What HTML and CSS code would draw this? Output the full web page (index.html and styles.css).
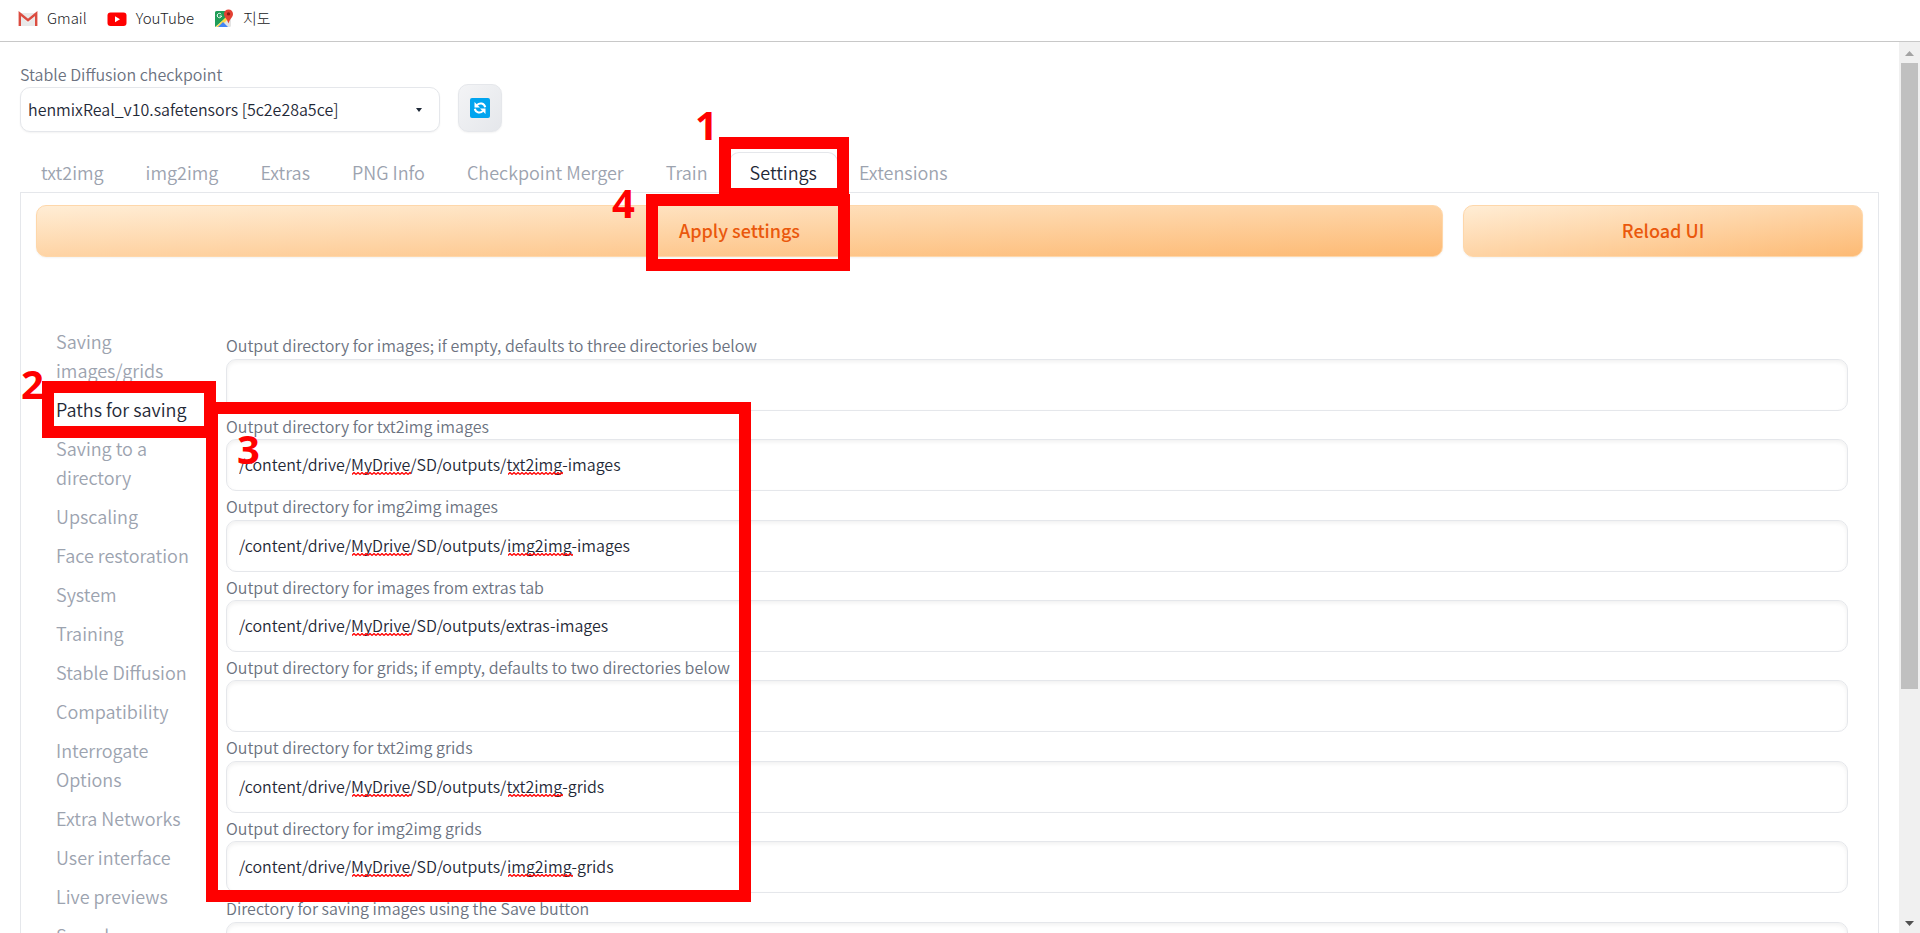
FILE: index.html
```html
<!DOCTYPE html>
<html lang="en">
<head>
<meta charset="utf-8">
<title>Stable Diffusion</title>
<link rel="stylesheet" href="styles.css">
</head>
<body>
<nav class="bookmarks" aria-label="Bookmarks">
  <a class="bookmark" href="#gmail">
    <svg class="bookmark-icon" viewBox="0 0 20 20" aria-hidden="true">
      <path d="M2 4h16v13H2z" fill="#e9e9e9"/>
      <path d="M2 4l8 7 8-7v2l-8 8-8-8z" fill="#f6f6f6"/>
      <path d="M1.800 17V4.600L10 11.200l8.200-6.600V17" fill="none" stroke="#db4c40" stroke-width="2.400"/>
    </svg>
    <span>Gmail</span>
  </a>
  <a class="bookmark" href="#youtube">
    <svg class="bookmark-icon" viewBox="0 0 20 20" aria-hidden="true">
      <rect x="0.500" y="3.500" width="19" height="13.500" rx="3" fill="#f00"/>
      <path d="M8 7.200v6l5-3z" fill="#fff"/>
    </svg>
    <span>YouTube</span>
  </a>
  <a class="bookmark" href="#maps">
    <svg class="bookmark-icon" viewBox="0 0 20 20" aria-hidden="true">
      <rect x="1" y="2" width="16" height="16" rx="1.500" fill="#e4e4e4"/>
      <path d="M1 3.500A1.500 1.500 0 0 1 2.500 2H12L13 8 1 18z" fill="#1f9d58"/>
      <path d="M2 18L12.500 7.500 14.500 9.500 6 18z" fill="#fddb4b"/>
      <path d="M4 18l5-5 5 5z" fill="#4485f5"/>
      <path d="M7.200 5.200A2.200 2.200 0 1 0 7.600 7H5.600" fill="none" stroke="#fff" stroke-width="1"/>
      <path d="M14.500 0.500c2.600 0 4.500 2 4.500 4.400 0 3.400-3.300 4.600-4.500 9.600C13.300 9.500 10 8.300 10 4.900 10 2.500 11.900.5 14.500.5z" fill="#e34133"/>
      <circle cx="14.500" cy="4.900" r="1.700" fill="#8c1d14"/>
    </svg>
    <span>지도</span>
  </a>
</nav>

<div class="viewport">
  <main class="app">
    <div class="quicksettings">
      <div class="checkpoint">
        <label class="label" for="checkpoint">Stable Diffusion checkpoint</label>
        <div class="select-wrap">
          <select class="select" id="checkpoint">
            <option>henmixReal_v10.safetensors [5c2e28a5ce]</option>
          </select>
          <svg class="select-arrow" viewBox="0 0 6 4" aria-hidden="true"><path d="M0 0h6L3 4z"/></svg>
        </div>
      </div>
      <button class="refresh" type="button" aria-label="Refresh checkpoints">
        <svg class="refresh-icon" viewBox="0 0 20 20" aria-hidden="true">
          <rect width="20" height="20" rx="2" fill="#00a4ef"/>
          <path d="M7 7.200C9.500 4.300 14.200 5 15.200 9.200" fill="none" stroke="#fff" stroke-width="2"/>
          <path d="M4.500 4v5.500h5.500z" fill="#fff"/>
          <path d="M13 12.800C10.500 15.700 5.800 15 4.800 10.800" fill="none" stroke="#fff" stroke-width="2"/>
          <path d="M15.500 16v-5.500h-5.500z" fill="#fff"/>
        </svg>
      </button>
    </div>

    <div class="tabs" role="tablist">
      <button class="tab" role="tab" type="button">txt2img</button>
      <button class="tab" role="tab" type="button">img2img</button>
      <button class="tab" role="tab" type="button">Extras</button>
      <button class="tab" role="tab" type="button">PNG Info</button>
      <button class="tab" role="tab" type="button">Checkpoint Merger</button>
      <button class="tab" role="tab" type="button">Train</button>
      <button class="tab tab-active" role="tab" type="button" aria-selected="true">Settings</button>
      <button class="tab" role="tab" type="button">Extensions</button>
    </div>

    <section class="panel">
      <div class="actions">
        <button class="primary primary-wide" type="button">Apply settings</button>
        <button class="primary" type="button">Reload UI</button>
      </div>

      <div class="settings">
        <div class="sections">
          <button class="section" type="button">Saving images/grids</button>
          <button class="section section-active" type="button">Paths for saving</button>
          <button class="section" type="button">Saving to a directory</button>
          <button class="section" type="button">Upscaling</button>
          <button class="section" type="button">Face restoration</button>
          <button class="section" type="button">System</button>
          <button class="section" type="button">Training</button>
          <button class="section" type="button">Stable Diffusion</button>
          <button class="section" type="button">Compatibility</button>
          <button class="section" type="button">Interrogate Options</button>
          <button class="section" type="button">Extra Networks</button>
          <button class="section" type="button">User interface</button>
          <button class="section" type="button">Live previews</button>
          <button class="section" type="button">Sampler parameters</button>
        </div>

        <form class="fields">
          <div class="field">
            <label class="label" for="out-images">Output directory for images; if empty, defaults to three directories below</label>
            <div class="input-wrap"><input class="input" id="out-images" type="text"></div>
          </div>
          <div class="field">
            <label class="label" for="out-txt2img">Output directory for txt2img images</label>
            <div class="input-wrap">
              <input class="input" id="out-txt2img" type="text" value="/content/drive/MyDrive/SD/outputs/txt2img-images">
              <span class="squiggle squiggle-drive"></span><span class="squiggle squiggle-txt"></span>
            </div>
          </div>
          <div class="field">
            <label class="label" for="out-img2img">Output directory for img2img images</label>
            <div class="input-wrap">
              <input class="input" id="out-img2img" type="text" value="/content/drive/MyDrive/SD/outputs/img2img-images">
              <span class="squiggle squiggle-drive"></span><span class="squiggle squiggle-img"></span>
            </div>
          </div>
          <div class="field">
            <label class="label" for="out-extras">Output directory for images from extras tab</label>
            <div class="input-wrap">
              <input class="input" id="out-extras" type="text" value="/content/drive/MyDrive/SD/outputs/extras-images">
              <span class="squiggle squiggle-drive"></span>
            </div>
          </div>
          <div class="field">
            <label class="label" for="out-grids">Output directory for grids; if empty, defaults to two directories below</label>
            <div class="input-wrap"><input class="input" id="out-grids" type="text"></div>
          </div>
          <div class="field">
            <label class="label" for="out-txt2img-grids">Output directory for txt2img grids</label>
            <div class="input-wrap">
              <input class="input" id="out-txt2img-grids" type="text" value="/content/drive/MyDrive/SD/outputs/txt2img-grids">
              <span class="squiggle squiggle-drive"></span><span class="squiggle squiggle-txt"></span>
            </div>
          </div>
          <div class="field">
            <label class="label" for="out-img2img-grids">Output directory for img2img grids</label>
            <div class="input-wrap">
              <input class="input" id="out-img2img-grids" type="text" value="/content/drive/MyDrive/SD/outputs/img2img-grids">
              <span class="squiggle squiggle-drive"></span><span class="squiggle squiggle-img"></span>
            </div>
          </div>
          <div class="field">
            <label class="label" for="out-save">Directory for saving images using the Save button</label>
            <div class="input-wrap"><input class="input" id="out-save" type="text"></div>
          </div>
        </form>
      </div>
    </section>
  </main>

  <div class="scrollbar" aria-hidden="true">
    <svg class="scroll-arrow" viewBox="0 0 9 5"><path d="M0 5h9L4.500 0z" fill="#a3a3a3"/></svg>
    <div class="scroll-thumb"></div>
    <div class="scroll-rest"></div>
    <svg class="scroll-arrow" viewBox="0 0 9 5"><path d="M0 0h9L4.500 5z" fill="#505050"/></svg>
  </div>
</div>

<div class="mark mark-box mark-tab"></div>
<div class="mark mark-box mark-apply"></div>
<div class="mark mark-box mark-section"></div>
<div class="mark mark-box mark-fields"></div>
<span class="mark mark-number number-one">1</span>
<span class="mark mark-number number-two">2</span>
<span class="mark mark-number number-three">3</span>
<span class="mark mark-number number-four">4</span>
</body>
</html>
```
FILE: styles.css
```css
* { box-sizing: border-box; }

body {
  margin: 0;
  height: 100vh;
  display: flex;
  flex-direction: column;
  position: relative;
  overflow: hidden;
  background: #fff;
  color: #1f2937;
  font-family: "Noto Sans CJK KR", "Noto Sans", sans-serif;
  font-size: 16px;
  font-weight: 350;
  line-height: 1.4;
}

button, input, select { font: inherit; color: inherit; margin: 0; }
button { cursor: pointer; }

.bookmarks {
  flex: none;
  display: flex;
  align-items: center;
  gap: 20px;
  height: 42px;
  padding: 0 18px 4px;
  border-bottom: 1px solid #c8c8c8;
}
.bookmark {
  display: flex;
  align-items: center;
  gap: 9px;
  color: #202124;
  font-size: 15px;
  font-weight: 300;
  line-height: 1.5;
  text-decoration: none;
}
.bookmark-icon { width: 20px; height: 20px; }

.viewport { flex: 1; min-height: 0; display: flex; }
.app {
  flex: 1;
  min-width: 0;
  overflow: hidden;
  padding: 21px 20px 0;
}

.label { display: block; color: #6b7280; }

.quicksettings { display: flex; align-items: flex-end; gap: 18px; }
.checkpoint { width: 420px; }
.select-wrap { position: relative; margin-top: 2px; }
.select {
  display: block;
  width: 100%;
  height: 45px;
  padding: 0 40px 2px 7px;
  border: 1px solid #e5e7eb;
  border-radius: 10px;
  background: #fff;
  box-shadow: 0 1px 2px rgba(0, 0, 0, 0.05);
  appearance: none;
}
.select-arrow {
  position: absolute;
  right: 18px;
  top: 21px;
  width: 6px;
  height: 4px;
  fill: #1f2937;
}
.refresh {
  display: grid;
  place-items: center;
  width: 44px;
  height: 48px;
  padding: 0;
  border: 1px solid #e5e7eb;
  border-radius: 10px;
  background: linear-gradient(to bottom right, #f3f4f6, #e5e7eb);
  box-shadow: 0 1px 2px rgba(0, 0, 0, 0.05);
}
.refresh-icon { width: 20px; height: 20px; }

.tabs { display: flex; margin-top: 20px; }
.tab {
  height: 40px;
  padding: 0 20px;
  border: 1px solid transparent;
  border-bottom: 0;
  border-radius: 10px 10px 0 0;
  background: none;
  color: #9ca3af;
  font-size: 18px;
}
.tab-active { border-color: #e5e7eb; color: #1f2937; }

.panel { border: 1px solid #e5e7eb; padding: 12px 15px; }
.actions { display: flex; gap: 20px; }
.primary {
  flex: 0 0 400px;
  height: 52px;
  padding: 0 0 2px;
  border: 1px solid #fed7aa;
  border-radius: 10px;
  background: linear-gradient(to bottom right, #ffedd5, #fdba74);
  box-shadow: 0 1px 2px rgba(0, 0, 0, 0.05);
  color: #ea580c;
  font-size: 18px;
  font-weight: 500;
}
.primary-wide { flex: 1; }

.settings { display: flex; margin-top: 65px; padding: 0 15px 0 10px; }
.sections { flex: 0 0 180px; }
.section {
  display: block;
  width: 160px;
  padding: 5px 10px;
  border: 0;
  background: none;
  color: #9ca3af;
  font-size: 18px;
  line-height: 29px;
  text-align: left;
}
.section-active { color: #1f2937; }

.fields { flex: 1; min-width: 0; padding-top: 8px; }
.field { padding-top: 4px; }
.input-wrap { position: relative; margin-top: 2px; }
.input {
  display: block;
  width: 100%;
  height: 52px;
  padding: 0 12px 2px;
  border: 1px solid #e5e7eb;
  border-radius: 10px;
  background: #fff;
  box-shadow: inset 0 2px 4px rgba(0, 0, 0, 0.06);
}
.squiggle {
  position: absolute;
  top: 33px;
  height: 3px;
  background: url("data:image/svg+xml,%3Csvg xmlns='http://www.w3.org/2000/svg' width='4' height='3'%3E%3Cpath d='M0 2.500L2 .5l2 2' fill='none' stroke='red' stroke-width='1.300'/%3E%3C/svg%3E") repeat-x;
}
.squiggle-drive { left: 126px; width: 59px; }
.squiggle-txt { left: 282px; width: 55px; }
.squiggle-img { left: 282px; width: 65px; }

.scrollbar {
  flex: none;
  display: flex;
  flex-direction: column;
  width: 21px;
  padding: 0 2px;
  background: #f0f0f0;
}
.scroll-arrow { display: block; width: 9px; height: 5px; margin: 9px auto 7px; }
.scroll-thumb { flex: 14; background: #c0c0c0; }
.scroll-rest { flex: 5; }

.mark { position: absolute; pointer-events: none; }
.mark-box { border: 12px solid #f00; }
.mark-tab { left: 719px; top: 137px; width: 130px; height: 63px; }
.mark-apply { left: 646px; top: 194px; width: 204px; height: 77px; }
.mark-section { left: 42px; top: 381px; width: 174px; height: 57px; }
.mark-fields { left: 206px; top: 402px; width: 545px; height: 500px; }
.mark-number {
  color: #f00;
  font-family: "Open Sans", "Noto Sans", sans-serif;
  font-size: 40px;
  font-weight: 700;
  line-height: 40px;
}
.number-one { left: 695px; top: 105px; }
.number-two { left: 21px; top: 364px; }
.number-three { left: 237px; top: 429px; }
.number-four { left: 612px; top: 183px; }
```
